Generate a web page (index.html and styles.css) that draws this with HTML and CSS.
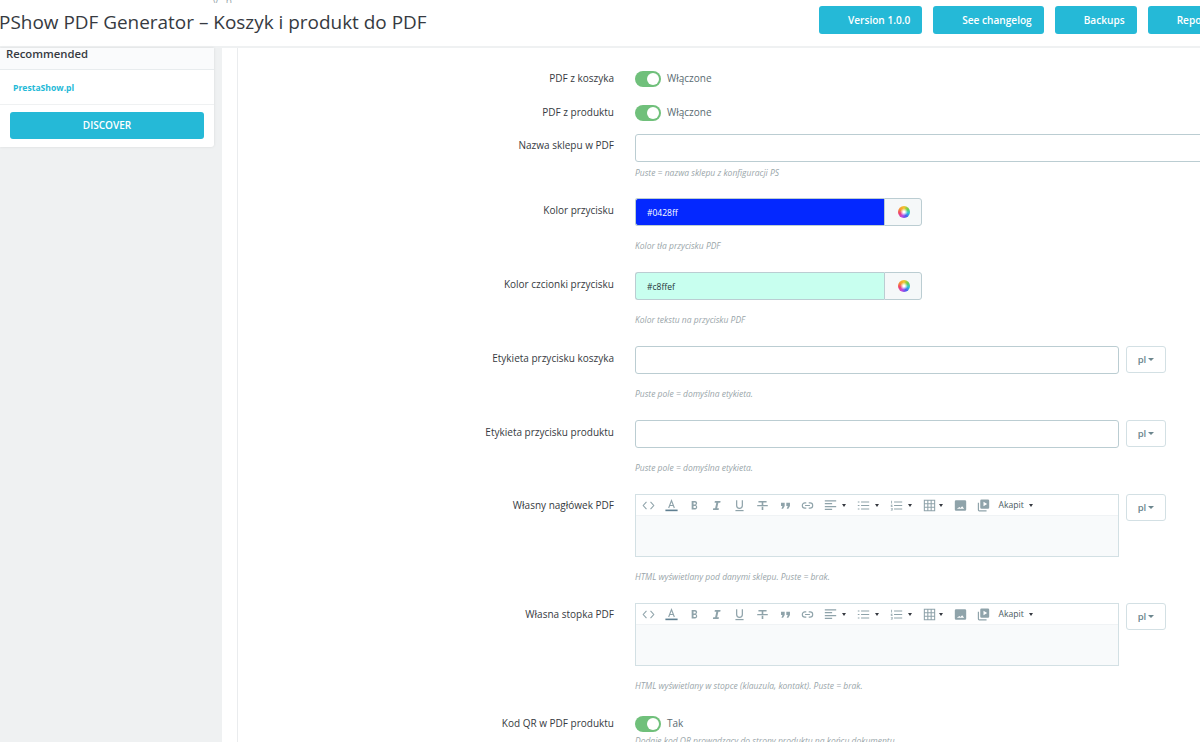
FILE: index.html
```html
<!DOCTYPE html>
<html lang="pl">
<head>
<meta charset="utf-8">
<title>PShow PDF Generator</title>
<link rel="stylesheet" href="styles.css">
</head>
<body>
<svg class="defs" width="0" height="0" aria-hidden="true">
  <symbol id="i-code" viewBox="0 0 16 16"><path d="M5.5 3.5 1.5 8l4 4.500M10.500 3.500l4 4.500-4 4.500" fill="none" stroke="currentColor" stroke-width="1.300"/></symbol>
  <symbol id="i-a" viewBox="0 0 16 16"><path d="M4.500 11 8 2 11.500 11M5.600 8h4.800" fill="none" stroke="currentColor" stroke-width="1.400"/><rect x="0.500" y="13" width="15" height="2" fill="#5f7f91"/></symbol>
  <symbol id="i-b" viewBox="0 0 16 16"><path d="M4.500 2.500h4.200a2.600 2.600 0 0 1 1 5 2.900 2.900 0 0 1-.8 5.500H4.500zM6.800 4.400v2.400h1.600a1.200 1.200 0 0 0 0-2.400zm0 4.100v2.600h1.900a1.300 1.300 0 0 0 0-2.600z" fill="currentColor" fill-rule="evenodd"/></symbol>
  <symbol id="i-i" viewBox="0 0 16 16"><path d="M6 2.500h7l-.4 2h-2.300l-1.500 7h2.200l-.4 2H3.600l.4-2h2.300l1.500-7H5.600z" fill="currentColor"/></symbol>
  <symbol id="i-u" viewBox="0 0 16 16"><path d="M4.500 1.500v6.500a3.500 3.500 0 0 0 7 0V1.500" fill="none" stroke="currentColor" stroke-width="1.500"/><rect x="3" y="13.500" width="10" height="1.500" fill="currentColor"/></symbol>
  <symbol id="i-s" viewBox="0 0 16 16"><path d="M3 2.500h10v1.800H9v3H7v-3H3zM1.500 7.500h13v1.300h-13zM7 9.500h2v4H7z" fill="currentColor"/></symbol>
  <symbol id="i-q" viewBox="0 0 16 16"><path d="M2.500 4.500h4.500v4.200L5 12H3l1.300-3.300H2.500zM9 4.500h4.500v4.200L11.500 12h-2l1.300-3.300H9z" fill="currentColor"/></symbol>
  <symbol id="i-l" viewBox="0 0 16 16"><path d="M6.500 4.800H4.800a3.200 3.200 0 0 0 0 6.400h1.700M9.500 4.800h1.700a3.200 3.200 0 0 1 0 6.400H9.500M5 8h6" fill="none" stroke="currentColor" stroke-width="1.400"/></symbol>
  <symbol id="i-al" viewBox="0 0 16 16"><path d="M1 1.500h14v1.500H1zM1 5h9v1.500H1zM1 8.500h14V10H1zM1 12h9v1.500H1z" fill="currentColor"/></symbol>
  <symbol id="i-ul" viewBox="0 0 16 16"><path d="M5 3h10v1.400H5zM5 7.300h10v1.400H5zM5 11.600h10V13H5zM1 3h2v1.400H1zM1 7.300h2v1.400H1zM1 11.600h2V13H1z" fill="currentColor"/></symbol>
  <symbol id="i-ol" viewBox="0 0 16 16"><path d="M5 3h10v1.400H5zM5 7.300h10v1.400H5zM5 11.600h10V13H5zM1.500 2h1v3.400h-1zM1 7h2.200v1H2v.6h1.200v1H1zM1 11h2.200v3.200H1v-.8h1.200v-.4H1.400v-.8h.8v-.4H1z" fill="currentColor"/></symbol>
  <symbol id="i-t" viewBox="0 0 16 16"><path d="M1 1h14v14H1zM2.300 2.300v3h3v-3zm4.300 0v3h2.800v-3zm4.100 0v3h3v-3zM2.300 6.600v2.800h3V6.600zm4.300 0v2.800h2.800V6.600zm4.100 0v2.800h3V6.600zM2.300 10.700v3h3v-3zm4.300 0v3h2.800v-3zm4.100 0v3h3v-3z" fill="currentColor" fill-rule="evenodd"/></symbol>
  <symbol id="i-img" viewBox="0 0 16 16"><path d="M2.500 1.500h11A1.500 1.500 0 0 1 15 3v10a1.500 1.500 0 0 1-1.500 1.500h-11A1.500 1.500 0 0 1 1 13V3a1.500 1.500 0 0 1 1.500-1.500zM3.500 12h9L10 9l-2 2-1.300-1.300z" fill="currentColor" fill-rule="evenodd"/></symbol>
  <symbol id="i-vid" viewBox="0 0 16 16"><path d="M5.500 .5h8A1.500 1.500 0 0 1 15 2v8.500a1.500 1.500 0 0 1-1.500 1.500h-8A1.500 1.500 0 0 1 4 10.500V2A1.500 1.500 0 0 1 5.500 .5zM8 3.500v5.500l4.500-2.750z" fill="currentColor" fill-rule="evenodd"/><path d="M1.750 4.500v9A1 1 0 0 0 2.750 14.500h9" fill="none" stroke="currentColor" stroke-width="1.500"/></symbol>
</svg>

<header class="header">
  <div class="title-block">
    <div class="crumbs">y , p</div>
    <h1 class="title">PShow PDF Generator – Koszyk i produkt do PDF</h1>
  </div>
  <div class="toolbar-actions">
    <a class="action">Version 1.0.0</a>
    <a class="action">See changelog</a>
    <a class="action">Backups</a>
    <a class="action">Report a bug</a>
  </div>
</header>

<div class="layout">
  <aside class="sidebar">
    <div class="card">
      <div class="card-head">Recommended</div>
      <div class="card-link"><a>PrestaShow.pl</a></div>
      <div class="card-foot"><a class="discover">DISCOVER</a></div>
    </div>
  </aside>
  <main class="main">
    <form class="form">
      <div class="row row-switch">
        <label class="label">PDF z koszyka</label>
        <div class="control switch-wrap"><span class="switch"></span><span class="switch-text">Włączone</span></div>
      </div>
      <div class="row row-switch row-switch-2">
        <label class="label">PDF z produktu</label>
        <div class="control switch-wrap"><span class="switch"></span><span class="switch-text">Włączone</span></div>
      </div>
      <div class="row row-shop">
        <label class="label">Nazwa sklepu w PDF</label>
        <div class="control">
          <input class="input input-full" type="text">
          <p class="help help-near">Puste = nazwa sklepu z konfiguracji PS</p>
        </div>
      </div>
      <div class="row">
        <label class="label label-low">Kolor przycisku</label>
        <div class="control">
          <div class="color-group">
            <input class="color-input color-blue" type="text" value="#0428ff">
            <span class="color-btn"><span class="wheel"></span></span>
          </div>
          <p class="help">Kolor tła przycisku PDF</p>
        </div>
      </div>
      <div class="row">
        <label class="label label-low">Kolor czcionki przycisku</label>
        <div class="control">
          <div class="color-group">
            <input class="color-input color-mint" type="text" value="#c8ffef">
            <span class="color-btn"><span class="wheel"></span></span>
          </div>
          <p class="help">Kolor tekstu na przycisku PDF</p>
        </div>
      </div>
      <div class="row">
        <label class="label label-low">Etykieta przycisku koszyka</label>
        <div class="control">
          <div class="lang-group">
            <input class="input input-lang" type="text">
            <span class="lang-btn">pl<i class="caret"></i></span>
          </div>
          <p class="help">Puste pole = domyślna etykieta.</p>
        </div>
      </div>
      <div class="row">
        <label class="label label-low">Etykieta przycisku produktu</label>
        <div class="control">
          <div class="lang-group">
            <input class="input input-lang" type="text">
            <span class="lang-btn">pl<i class="caret"></i></span>
          </div>
          <p class="help">Puste pole = domyślna etykieta.</p>
        </div>
      </div>
      <div class="row">
        <label class="label">Własny nagłówek PDF</label>
        <div class="control">
          <div class="lang-group">
            <div class="editor">
              <div class="tb">
                <span class="tool"><svg class="ico"><use href="#i-code"/></svg></span>
                <span class="tool"><svg class="ico"><use href="#i-a"/></svg></span>
                <span class="tool"><svg class="ico"><use href="#i-b"/></svg></span>
                <span class="tool"><svg class="ico"><use href="#i-i"/></svg></span>
                <span class="tool"><svg class="ico"><use href="#i-u"/></svg></span>
                <span class="tool"><svg class="ico"><use href="#i-s"/></svg></span>
                <span class="tool"><svg class="ico"><use href="#i-q"/></svg></span>
                <span class="tool"><svg class="ico"><use href="#i-l"/></svg></span>
                <span class="tool tool-drop"><svg class="ico"><use href="#i-al"/></svg><i class="caret caret-tb"></i></span>
                <span class="tool tool-drop"><svg class="ico"><use href="#i-ul"/></svg><i class="caret caret-tb"></i></span>
                <span class="tool tool-drop"><svg class="ico"><use href="#i-ol"/></svg><i class="caret caret-tb"></i></span>
                <span class="tool tool-table"><svg class="ico"><use href="#i-t"/></svg><i class="caret caret-tb"></i></span>
                <span class="tool"><svg class="ico"><use href="#i-img"/></svg></span>
                <span class="tool"><svg class="ico"><use href="#i-vid"/></svg></span>
                <span class="tool-para">Akapit<i class="caret caret-tb"></i></span>
              </div>
              <div class="editor-body"></div>
            </div>
            <span class="lang-btn">pl<i class="caret"></i></span>
          </div>
          <p class="help help-editor">HTML wyświetlany pod danymi sklepu. Puste = brak.</p>
        </div>
      </div>
      <div class="row row-last-editor">
        <label class="label">Własna stopka PDF</label>
        <div class="control">
          <div class="lang-group">
            <div class="editor">
              <div class="tb">
                <span class="tool"><svg class="ico"><use href="#i-code"/></svg></span>
                <span class="tool"><svg class="ico"><use href="#i-a"/></svg></span>
                <span class="tool"><svg class="ico"><use href="#i-b"/></svg></span>
                <span class="tool"><svg class="ico"><use href="#i-i"/></svg></span>
                <span class="tool"><svg class="ico"><use href="#i-u"/></svg></span>
                <span class="tool"><svg class="ico"><use href="#i-s"/></svg></span>
                <span class="tool"><svg class="ico"><use href="#i-q"/></svg></span>
                <span class="tool"><svg class="ico"><use href="#i-l"/></svg></span>
                <span class="tool tool-drop"><svg class="ico"><use href="#i-al"/></svg><i class="caret caret-tb"></i></span>
                <span class="tool tool-drop"><svg class="ico"><use href="#i-ul"/></svg><i class="caret caret-tb"></i></span>
                <span class="tool tool-drop"><svg class="ico"><use href="#i-ol"/></svg><i class="caret caret-tb"></i></span>
                <span class="tool tool-table"><svg class="ico"><use href="#i-t"/></svg><i class="caret caret-tb"></i></span>
                <span class="tool"><svg class="ico"><use href="#i-img"/></svg></span>
                <span class="tool"><svg class="ico"><use href="#i-vid"/></svg></span>
                <span class="tool-para">Akapit<i class="caret caret-tb"></i></span>
              </div>
              <div class="editor-body"></div>
            </div>
            <span class="lang-btn">pl<i class="caret"></i></span>
          </div>
          <p class="help help-editor">HTML wyświetlany w stopce (klauzula, kontakt). Puste = brak.</p>
        </div>
      </div>
      <div class="row row-switch row-qr">
        <label class="label">Kod QR w PDF produktu</label>
        <div class="control">
          <div class="switch-wrap"><span class="switch"></span><span class="switch-text">Tak</span></div>
          <p class="help help-qr">Dodaje kod QR prowadzący do strony produktu na końcu dokumentu.</p>
        </div>
      </div>
    </form>
  </main>
</div>
</body>
</html>
```

FILE: styles.css
```css
* { box-sizing: border-box; }
html, body { margin: 0; padding: 0; height: 742px; overflow: hidden; }
body {
  width: 1200px;
  background: #fff;
  font-family: "Open Sans", "Liberation Sans", sans-serif;
  color: #363a41;
  font-size: 10px;
}
.defs { display: block; height: 0; width: 0; }

.header {
  display: flex;
  height: 48px;
  background: #fff;
  border-bottom: 2px solid #eff1f2;
  overflow: hidden;
}
.title-block { flex: 0 0 819px; }
.crumbs {
  height: 3px;
  padding-left: 213px;
  font-size: 10px;
  line-height: 3px;
  color: #9aa8ad;
  overflow: hidden;
}
.title {
  margin: 6px 0 0 -1px;
  font-size: 18.950px;
  font-weight: 400;
  line-height: 27px;
  color: #363a41;
  white-space: nowrap;
}
.toolbar-actions { display: flex; gap: 11px; padding-top: 6px; flex: none; }
.action {
  display: flex;
  align-items: center;
  height: 28px;
  padding: 0 12px 0 29px;
  background: #25b9d7;
  border-radius: 3px;
  color: #fff;
  font-size: 10.100px;
  font-weight: 600;
  white-space: nowrap;
}

.layout { display: flex; height: 694px; }
.sidebar {
  flex: 0 0 222px;
  background: #eff1f2;
  padding-right: 8px;
}
.card {
  background: #fff;
  border-radius: 0 0 3px 0;
  box-shadow: 0 0 3px rgba(0, 0, 0, .1);
  height: 99px;
}
.card-head {
  height: 22px;
  padding-left: 6px;
  background: #fafbfc;
  border-bottom: 1px solid #e8ecee;
  font-size: 11.300px;
  font-weight: 600;
  line-height: 11px;
}
.card-link {
  height: 35px;
  padding: 11px 0 0 13px;
  border-bottom: 1px solid #eff1f2;
  color: #25b9d7;
  font-size: 8.600px;
  font-weight: 700;
  line-height: 14px;
}
.card-foot { padding: 7px 10px 0; }
.discover {
  display: block;
  height: 27px;
  background: #25b9d7;
  border-radius: 3px;
  color: #fff;
  font-size: 10px;
  font-weight: 600;
  line-height: 26px;
  text-align: center;
}

.main {
  flex: 1;
  margin-left: 15px;
  border-left: 1px solid #eaecee;
  background: #fff;
  overflow: hidden;
}
.form { padding-top: 23px; }
.row { display: flex; margin-bottom: 19px; }
.row-switch { margin-bottom: 18px; height: 16px; }
.row-switch-2 { margin-bottom: 13px; }
.row-shop { margin-bottom: 18px; }
.row-last-editor { margin-bottom: 23px; }
.label {
  flex: 0 0 376px;
  padding-top: 4px;
  font-size: 10px;
  line-height: 14px;
  text-align: right;
  color: #363a41;
}
.label-low { padding-top: 5px; }
.row-switch .label { padding-top: 0; }
.control { margin-left: 21px; flex: none; }

.switch-wrap { display: flex; align-items: center; height: 16px; }
.switch {
  position: relative;
  display: block;
  width: 26px;
  height: 16px;
  border-radius: 8px;
  background: #70c07b;
}
.switch::after {
  content: "";
  position: absolute;
  top: 2px;
  right: 2px;
  width: 12px;
  height: 12px;
  border-radius: 50%;
  background: #fff;
}
.switch-text { margin-left: 6px; padding-bottom: 2px; font-size: 10px; line-height: 14px; color: #5a6b72; }

.input {
  display: block;
  height: 28px;
  background: #fff;
  border: 1px solid #bbcdd2;
  border-radius: 3px;
  padding: 0 10px;
  outline: 0;
}
.input-full { width: 620px; }
.input-lang { width: 484px; }

.help {
  margin: 13px 0 0;
  font-size: 8.500px;
  font-style: italic;
  line-height: 14px;
  color: #9aa6aa;
  white-space: nowrap;
}
.help-near { margin-top: 4px; }
.help-editor { margin-top: 13px; }
.help-qr { margin-top: 2px; }

.color-group { display: flex; width: 287px; height: 28px; }
.color-input {
  flex: 0 0 249px;
  width: 249px;
  height: 28px;
  border: 1px solid #bbcdd2;
  border-right: 0;
  border-radius: 3px 0 0 3px;
  padding: 0 11px;
  font-family: inherit;
  font-size: 8.500px;
  outline: 0;
}
.color-blue { background: #0428ff; color: #fff; }
.color-mint { background: #c8ffef; color: #25353a; }
.color-btn {
  display: flex;
  flex: 1;
  align-items: center;
  justify-content: center;
  background: #f5f8f9;
  border: 1px solid #bbcdd2;
  border-radius: 0 3px 3px 0;
}
.wheel {
  display: block;
  width: 12px;
  height: 12px;
  margin-left: 1px;
  border-radius: 50%;
  background: radial-gradient(circle, #fff 0 10%, rgba(255,255,255,0) 45%), conic-gradient(#f4c430, #6cd04a, #2cc4d8, #4a5cf0, #c048e0, #f0406a, #f49a30, #f4c430);
}

.lang-group { display: flex; gap: 7px; align-items: flex-start; }
.lang-btn {
  display: flex;
  align-items: center;
  justify-content: center;
  flex: none;
  width: 40px;
  height: 27px;
  background: #fff;
  border: 1px solid #d3e0e4;
  border-radius: 3px;
  color: #6c868e;
  font-size: 9.500px;
  font-weight: 600;
  line-height: 1;
}
.caret {
  display: inline-block;
  width: 0;
  height: 0;
  margin-left: 2px;
  border-left: 3.500px solid transparent;
  border-right: 3.500px solid transparent;
  border-top: 3.500px solid currentColor;
}

.editor {
  width: 484px;
  height: 63px;
  border: 1px solid #d3e0e4;
  background: #f8fafb;
  display: flex;
  flex-direction: column;
}
.tb {
  display: flex;
  align-items: center;
  flex: none;
  height: 21px;
  padding-left: 1px;
  background: #fff;
  border-bottom: 1px solid #f0f3f5;
  color: #8fa3aa;
}
.editor-body { flex: 1; }
.tool { display: flex; align-items: center; flex: 0 0 22.750px; padding-left: 5px; }
.tool-drop { flex-basis: 33px; }
.tool-table { flex-basis: 31px; }
.ico { display: block; width: 13px; height: 13px; flex: none; }
.caret-tb { color: #363a41; margin-left: 5px; border-left-width: 2.500px; border-right-width: 2.500px; border-top-width: 3px; }
.tool-table .caret-tb { margin-left: 3px; }
.tool-para { display: flex; align-items: center; padding-left: 4px; font-size: 8.600px; color: #4a5a62; }
```
